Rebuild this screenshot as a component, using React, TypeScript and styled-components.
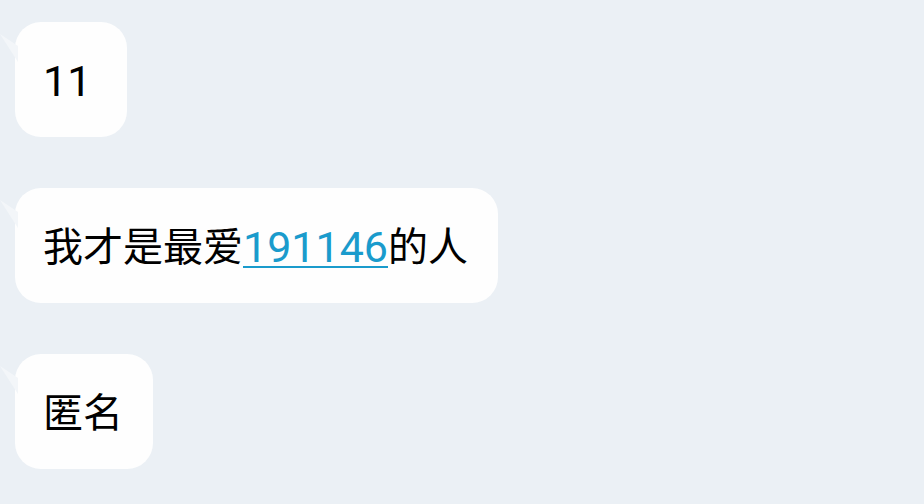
import React from "react";
import styled, { createGlobalStyle } from "styled-components";

const Global = createGlobalStyle`
  html, body { margin: 0; padding: 0; background: #ebf0f5; }
  body { font-family: Roboto, "Noto Sans CJK SC", sans-serif; }
`;

const Page = styled.div`
  width: 924px;
  height: 504px;
  overflow: hidden;
  background: #ebf0f5;
  display: flex;
  flex-direction: column;
  align-items: flex-start;
  gap: 51px;
  padding: 22px 0 0 15px;
  box-sizing: border-box;
`;

const Row = styled.div`
  position: relative;
`;

const Tail = styled.svg`
  position: absolute;
  left: -15px;
  top: 10px;
  width: 18px;
  height: 30px;
`;

const Bubble = styled.div`
  background: #fefefe;
  border-radius: 26px;
  min-width: 112px;
  box-sizing: border-box;
  height: 115px;
  padding: 4px 30px 0 28px;
  display: flex;
  align-items: center;
  font-size: 40px;
  line-height: 55px;
  color: #000;
  white-space: nowrap;
`;

const Num = styled.span<{ $link?: boolean }>`
  font-family: Roboto, sans-serif;
  font-size: 43px;
  color: ${(p) => (p.$link ? "#1a9bcc" : "#000")};
  text-decoration: ${(p) => (p.$link ? "underline" : "none")};
  text-decoration-thickness: 2px;
  text-underline-offset: 4px;
`;

const Msg: React.FC<{ children: React.ReactNode }> = ({ children }) => (
  <Row>
    <Tail viewBox="0 0 18 30">
      <path d="M0 2 L18 14 L18 30 Z" fill="#f3f6f9" />
    </Tail>
    <Bubble>{children}</Bubble>
  </Row>
);

export default function App() {
  return (
    <>
      <Global />
      <Page>
        <Msg>
          <Num>11</Num>
        </Msg>
        <Msg>
          我才是最爱<Num $link>191146</Num>的人
        </Msg>
        <Msg>匿名</Msg>
      </Page>
    </>
  );
}
